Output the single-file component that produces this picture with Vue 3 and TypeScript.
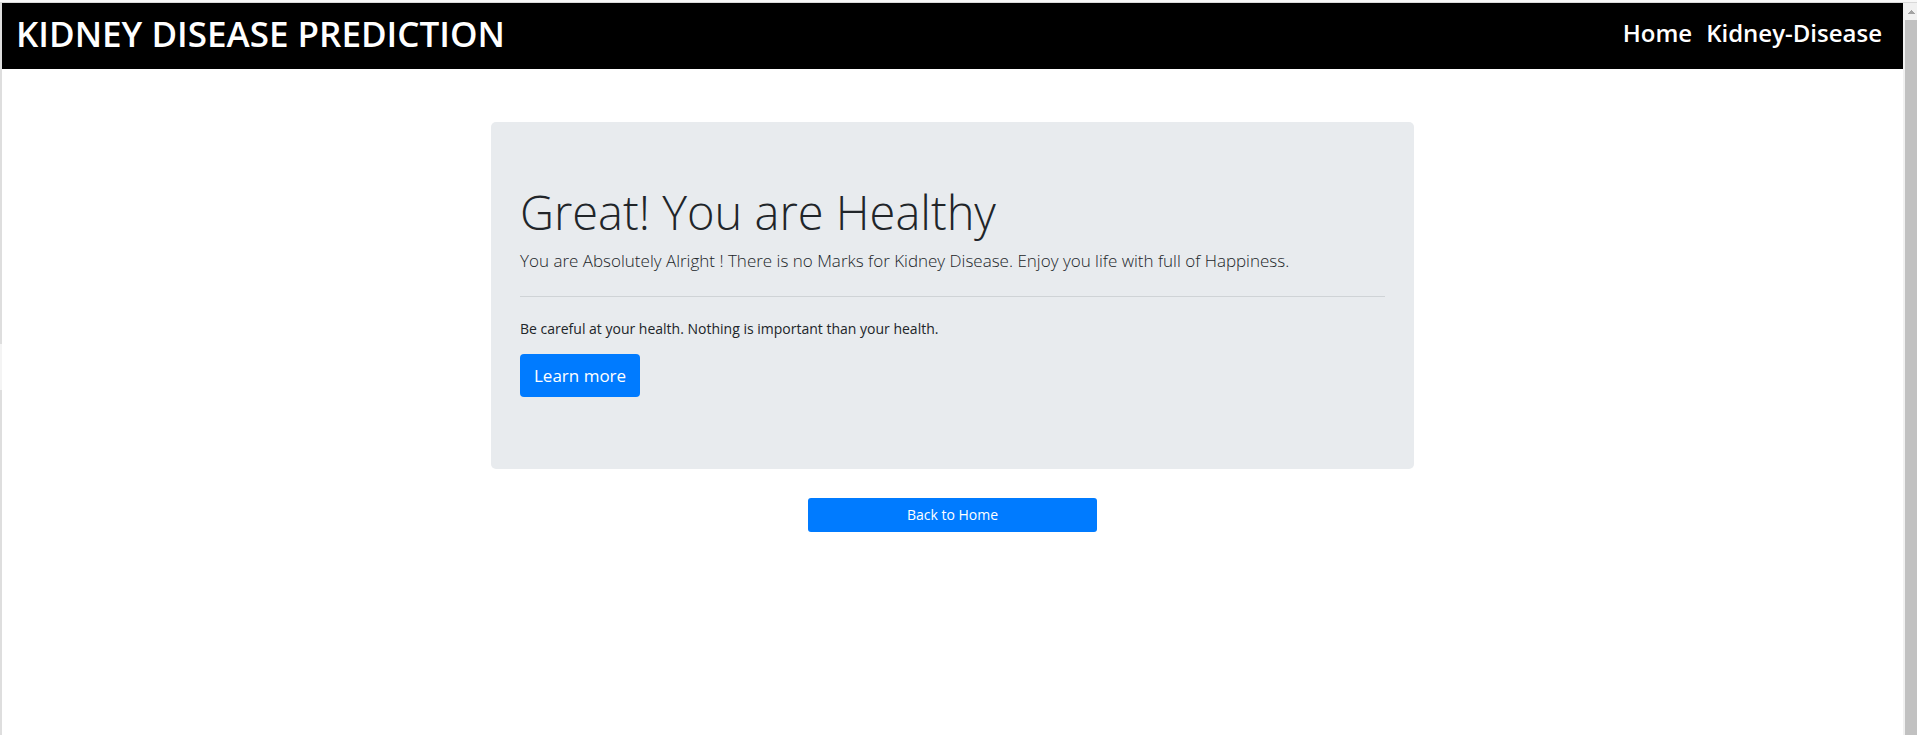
<script setup lang="ts">
interface NavLink {
  label: string
  href: string
}

const links: NavLink[] = [
  { label: 'Home', href: '#home' },
  { label: 'Kidney-Disease', href: '#kidney' },
]
</script>

<template>
  <div class="window">
    <div class="edge"><span class="handle"></span></div>
    <div class="page">
      <header class="navbar">
        <a class="brand" href="#home">KIDNEY DISEASE PREDICTION</a>
        <nav class="links">
          <a v-for="link in links" :key="link.label" :href="link.href">{{ link.label }}</a>
        </nav>
      </header>
      <main class="content">
        <section class="jumbotron">
          <h1>Great! You are Healthy</h1>
          <p class="lead">
            You are Absolutely Alright ! There is no Marks for Kidney Disease. Enjoy you life with full of Happiness.
          </p>
          <hr />
          <p class="note">Be careful at your health. Nothing is important than your health.</p>
          <a class="learn" href="#learn">Learn more</a>
        </section>
        <button class="back" type="button">Back to Home</button>
      </main>
    </div>
    <div class="scrollbar" aria-hidden="true">
      <svg class="arrow" viewBox="0 0 14 17" width="14" height="17">
        <path d="M5 11h7v-1h-1v-1h-1v-1h-1v-1h-1v1h-1v1h-1v1h-1z" fill="#a3a3a3" />
      </svg>
      <div class="thumb"></div>
    </div>
  </div>
</template>

<style>
body {
  background: #fff;
}
</style>

<style scoped>
.window {
  box-sizing: border-box;
  min-height: 100vh;
  display: grid;
  grid-template-columns: 2px 1fr 14px;
  border-top: 2px solid #f8f8f8;
  box-shadow: inset 0 1px #d9d9d9;
  padding-top: 1px;
  font-family: "Open Sans", "Noto Sans", sans-serif;
  color: #212529;
}
.edge {
  background: #dedede;
  padding-top: 341px;
}
.handle {
  display: block;
  height: 46px;
  background: #f4f4f4;
}
.navbar {
  display: flex;
  justify-content: space-between;
  align-items: flex-start;
  height: 66px;
  box-sizing: border-box;
  padding: 8px 21px 8px 14px;
  background: #000;
}
.navbar a {
  color: #fff;
  text-decoration: none;
  font-weight: 600;
}
.brand {
  font-size: 35px;
  line-height: 46px;
}
.links {
  display: flex;
  gap: 14px;
  font-size: 24px;
  line-height: 44px;
}
.content {
  display: flex;
  flex-direction: column;
  align-items: center;
  padding: 53px 16px;
}
.jumbotron {
  box-sizing: border-box;
  width: 100%;
  max-width: 923px;
  margin-bottom: 29px;
  padding: 64px 29px 72px;
  border-radius: 5px;
  background: #e8ebee;
}
h1 {
  margin: 0 0 8px;
  font-size: 47px;
  font-weight: 300;
  line-height: 52px;
}
.lead {
  margin: 0;
  font-size: 17px;
  font-weight: 300;
  line-height: 30px;
}
hr {
  margin: 20px 0;
  border: 0;
  border-top: 1px solid #cfd3d6;
}
.note {
  margin: 0 0 13px;
  font-size: 14px;
  line-height: 24px;
}
.learn {
  display: inline-block;
  padding: 0 14px;
  border-radius: 4px;
  background: #007bff;
  color: #fff;
  font-size: 17px;
  line-height: 43px;
  text-decoration: none;
  vertical-align: top;
}
.back {
  width: 289px;
  height: 34px;
  padding: 0 0 1px;
  border: 0;
  border-radius: 3px;
  background: #007bff;
  color: #fff;
  font-family: inherit;
  font-size: 14px;
}
.scrollbar {
  display: flex;
  flex-direction: column;
  background: #f1f1f1;
}
.arrow {
  display: block;
}
.thumb {
  flex: 1;
  margin-left: 2px;
  background: #c1c1c1;
}
</style>
